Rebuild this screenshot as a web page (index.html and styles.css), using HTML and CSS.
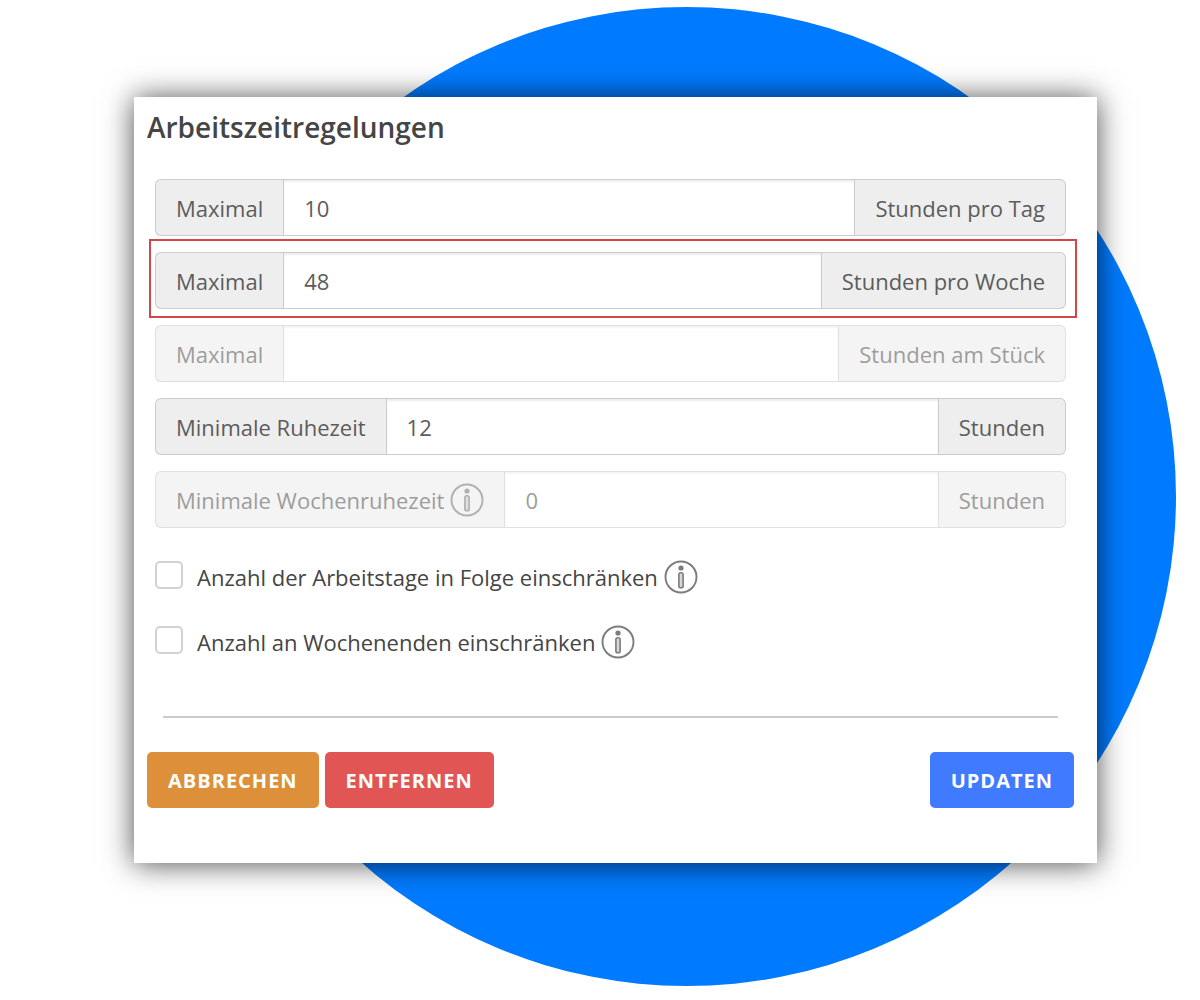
FILE: index.html
```html
<!DOCTYPE html>
<html lang="de">
<head>
  <meta charset="UTF-8">
  <meta name="viewport" content="width=device-width, initial-scale=1.0">
  <title>Arbeitszeitregelungen</title>
  <link rel="stylesheet" href="styles.css">
</head>
<body>
  <!-- Info-Symbol, wird unten mehrfach verwendet -->
  <svg class="sprite" aria-hidden="true">
    <symbol id="info" viewBox="0 0 34 34">
      <circle cx="17" cy="17" r="15.5" fill="none" stroke="currentColor" stroke-width="1.9"/>
      <circle cx="17" cy="8" r="2.6" fill="currentColor"/>
      <rect x="14.9" y="12.7" width="4.2" height="15" rx="1.8" fill="currentColor" fill-opacity="0.3" stroke="currentColor" stroke-width="1.6"/>
    </symbol>
  </svg>

  <main class="stage">
    <form class="card">
      <h1>Arbeitszeitregelungen</h1>

      <div class="fields">
        <div class="input-group">
          <label class="addon" for="max-tag">Maximal</label>
          <input type="text" id="max-tag" value="10">
          <span class="addon">Stunden pro Tag</span>
        </div>

        <div class="input-group highlight">
          <label class="addon" for="max-woche">Maximal</label>
          <input type="text" id="max-woche" value="48">
          <span class="addon">Stunden pro Woche</span>
        </div>

        <div class="input-group inactive">
          <label class="addon" for="max-stueck">Maximal</label>
          <input type="text" id="max-stueck" value="">
          <span class="addon">Stunden am Stück</span>
        </div>

        <div class="input-group">
          <label class="addon" for="min-ruhe">Minimale Ruhezeit</label>
          <input type="text" id="min-ruhe" value="12">
          <span class="addon">Stunden</span>
        </div>

        <div class="input-group inactive">
          <label class="addon" for="min-woche">Minimale Wochenruhezeit <svg class="info"><use href="#info"/></svg></label>
          <input type="text" id="min-woche" value="0">
          <span class="addon">Stunden</span>
        </div>
      </div>

      <div class="checks">
        <div class="check">
          <input type="checkbox" id="tage">
          <label for="tage">Anzahl der Arbeitstage in Folge einschränken</label>
          <svg class="info"><use href="#info"/></svg>
        </div>
        <div class="check">
          <input type="checkbox" id="wochenenden">
          <label for="wochenenden">Anzahl an Wochenenden einschränken</label>
          <svg class="info"><use href="#info"/></svg>
        </div>
      </div>

      <hr>

      <div class="actions">
        <button type="button" class="btn btn-cancel">Abbrechen</button>
        <button type="button" class="btn btn-remove">Entfernen</button>
        <button type="submit" class="btn btn-update">Updaten</button>
      </div>
    </form>
  </main>
</body>
</html>
```

FILE: styles.css
```css
:root {
  --blue: #007bff;
  --text: #454545;
  --addon-text: #5c5c5c;
  --addon-bg: #eeeeee;
  --border: #cccccc;
}

* {
  box-sizing: border-box;
}

body {
  margin: 0;
  background: #fff;
  color: var(--text);
  font-family: "Open Sans", "Noto Sans", sans-serif;
  font-size: 22px;
  line-height: 30px;
}

.sprite {
  display: none;
}

.stage {
  position: relative;
  min-height: 100vh;
  padding: 97px 103px 97px 134px;
}

/* Kreis im Hintergrund */
.stage::before {
  content: "";
  position: absolute;
  top: 7px;
  right: 24px;
  width: calc(100% - 221px);
  aspect-ratio: 1;
  border-radius: 50%;
  background: var(--blue);
}

.card {
  position: relative;
  padding: 10px 23px 55px 13px;
  background: #fff;
  box-shadow: 0 1px 28px rgba(0, 0, 0, 0.7);
}

h1 {
  margin: 0 0 32px;
  font-size: 28px;
  font-weight: 600;
  line-height: 40px;
}

.fields {
  display: flex;
  flex-direction: column;
  gap: 16px;
  padding: 0 8px;
}

.input-group {
  display: flex;
  position: relative;
  height: 57px;
}

.addon {
  display: flex;
  align-items: center;
  gap: 6px;
  padding: 0 20px;
  border: 1px solid var(--border);
  background: var(--addon-bg);
  color: var(--addon-text);
  white-space: nowrap;
}

.addon:first-child {
  border-right: 0;
  border-radius: 6px 0 0 6px;
}

.addon:last-child {
  border-left: 0;
  border-radius: 0 6px 6px 0;
}

.input-group input {
  flex: 1;
  min-width: 0;
  padding: 0 20px;
  border: 1px solid var(--border);
  background: #fff;
  box-shadow: inset 0 2px 2px rgba(0, 0, 0, 0.07);
  color: var(--addon-text);
  font: inherit;
}

.inactive {
  opacity: 0.6;
}

.highlight::after {
  content: "";
  position: absolute;
  inset: -13px -11px -9px -6px;
  border: 2px solid #d04848;
  pointer-events: none;
}

.info {
  flex: none;
  width: 34px;
  height: 34px;
  color: #7c7c7c;
}

.checks {
  display: flex;
  flex-direction: column;
  gap: 31px;
  padding: 32px 8px 0;
}

.check {
  display: flex;
  align-items: center;
  gap: 6px;
  height: 34px;
}

.check input {
  appearance: none;
  width: 28px;
  height: 28px;
  margin: 0 8px 4px 0;
  border: 2px solid #d2d2d2;
  border-radius: 5px;
  background: #fff;
}

.check input:checked {
  background: var(--blue);
}

hr {
  height: 2px;
  margin: 57px 16px 34px;
  border: 0;
  background: #cccccc;
}

.actions {
  display: flex;
  gap: 6px;
}

.btn {
  height: 56px;
  padding: 0 21px;
  border: 0;
  border-radius: 5px;
  color: #fff;
  font-family: inherit;
  font-size: 20px;
  font-weight: 700;
  letter-spacing: 1px;
  text-transform: uppercase;
}

.btn-cancel {
  background: #dd9039;
}

.btn-remove {
  background: #e15554;
}

.btn-update {
  margin-left: auto;
  background: #407bff;
}
```
